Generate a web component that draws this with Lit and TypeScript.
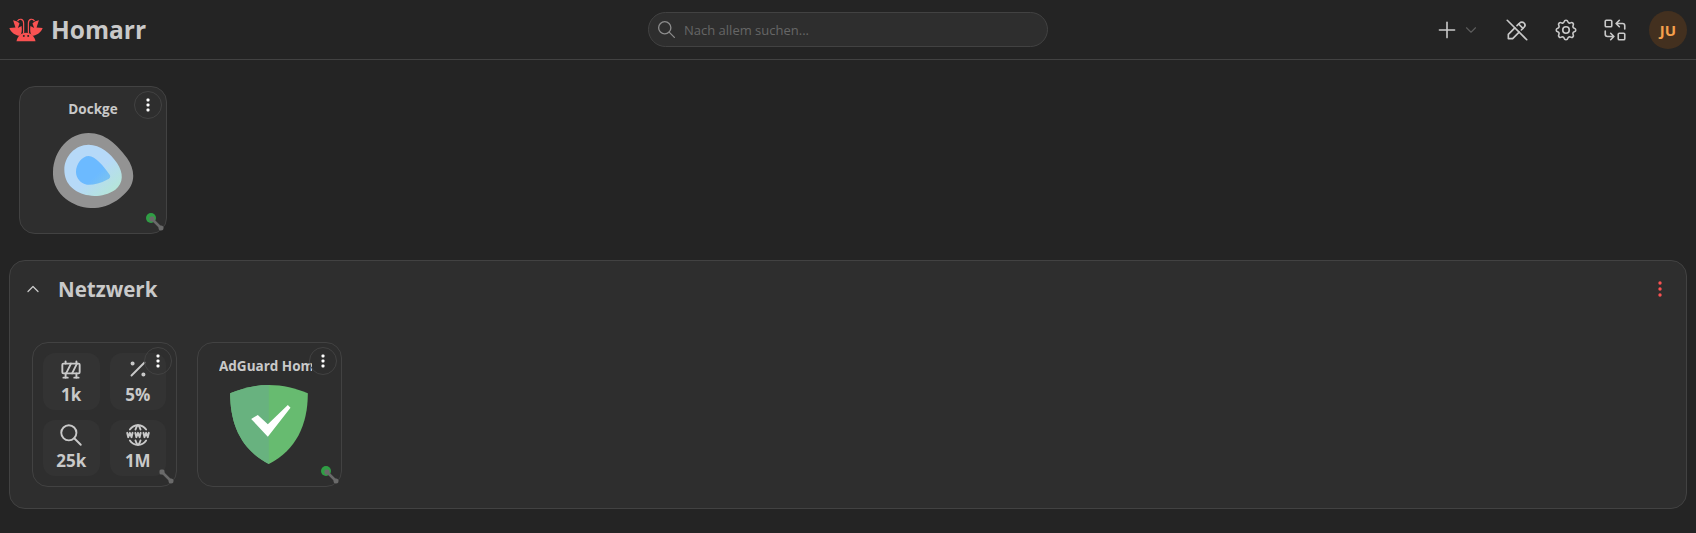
import { LitElement, css, html, svg } from "lit";
import { customElement } from "lit/decorators.js";

const tabler = (paths: string[], size: number, cls = "") => html`
  <svg
    class="icon ${cls}"
    width=${size}
    height=${size}
    viewBox="0 0 24 24"
    fill="none"
    stroke="currentColor"
    stroke-linecap="round"
    stroke-linejoin="round"
  >
    ${paths.map((d) => svg`<path d=${d}></path>`)}
  </svg>
`;

const ICONS = {
  search: ["M10 10m-7 0a7 7 0 1 0 14 0a7 7 0 1 0 -14 0", "M21 21l-6 -6"],
  plus: ["M12 5l0 14", "M5 12l14 0"],
  chevronDown: ["M6 9l6 6l6 -6"],
  chevronUp: ["M6 15l6 -6l6 6"],
  pencilOff: [
    "M10 10l-6 6v4h4l6 -6m1.99 -1.99l2.504 -2.504a2.828 2.828 0 1 0 -4 -4l-2.5 2.5",
    "M13.5 6.5l4 4",
    "M3 3l18 18",
  ],
  settings: [
    "M10.325 4.317c.426 -1.756 2.924 -1.756 3.35 0a1.724 1.724 0 0 0 2.573 1.066c1.543 -.94 3.31 .826 2.37 2.37a1.724 1.724 0 0 0 1.065 2.572c1.756 .426 1.756 2.924 0 3.35a1.724 1.724 0 0 0 -1.066 2.573c.94 1.543 -.826 3.31 -2.37 2.37a1.724 1.724 0 0 0 -2.572 1.065c-.426 1.756 -2.924 1.756 -3.35 0a1.724 1.724 0 0 0 -2.573 -1.066c-1.543 .94 -3.31 -.826 -2.37 -2.37a1.724 1.724 0 0 0 -1.065 -2.572c-1.756 -.426 -1.756 -2.924 0 -3.35a1.724 1.724 0 0 0 1.066 -2.573c-.94 -1.543 .826 -3.31 2.37 -2.37c1 .608 2.296 .07 2.572 -1.065z",
    "M9 12a3 3 0 1 0 6 0a3 3 0 0 0 -6 0",
  ],
  replace: [
    "M3 4a1 1 0 0 1 1 -1h4a1 1 0 0 1 1 1v4a1 1 0 0 1 -1 1h-4a1 1 0 0 1 -1 -1z",
    "M15 16a1 1 0 0 1 1 -1h4a1 1 0 0 1 1 1v4a1 1 0 0 1 -1 1h-4a1 1 0 0 1 -1 -1z",
    "M21 11v-3a2 2 0 0 0 -2 -2h-6l3 3m0 -6l-3 3",
    "M3 13v3a2 2 0 0 0 2 2h6l-3 -3m0 6l3 -3",
  ],
  barrier: [
    "M4 8a1 1 0 0 1 1 -1h14a1 1 0 0 1 1 1v7a1 1 0 0 1 -1 1h-14a1 1 0 0 1 -1 -1z",
    "M7 16v4",
    "M7.5 16l4.5 -9",
    "M13 16l4.5 -9",
    "M17 16v4",
    "M5 20h4",
    "M15 20h4",
    "M17 7v-2",
    "M7 7v-2",
  ],
  percent: [
    "M17 17m-1 0a1 1 0 1 0 2 0a1 1 0 1 0 -2 0",
    "M7 7m-1 0a1 1 0 1 0 2 0a1 1 0 1 0 -2 0",
    "M6 18l12 -12",
  ],
  www: [
    "M19.5 7a9 9 0 0 0 -7.5 -4a8.991 8.991 0 0 0 -7.484 4",
    "M11.5 3a16.989 16.989 0 0 0 -1.826 4",
    "M12.5 3a16.989 16.989 0 0 1 1.828 4",
    "M19.5 17a9 9 0 0 1 -7.5 4a8.991 8.991 0 0 1 -7.484 -4",
    "M11.5 21a16.989 16.989 0 0 1 -1.826 -4",
    "M12.5 21a16.989 16.989 0 0 0 1.828 -4",
    "M2 10l1 4l1.5 -4l1.5 4l1 -4",
    "M17 10l1 4l1.5 -4l1.5 4l1 -4",
    "M9.5 10l1 4l1.5 -4l1.5 4l1 -4",
  ],
};

const STATS = [
  { icon: ICONS.barrier, value: "1k" },
  { icon: ICONS.percent, value: "5%" },
  { icon: ICONS.search, value: "25k" },
  { icon: ICONS.www, value: "1M" },
];

const logo = html`
  <svg class="logo" width="34" height="24" viewBox="24 55 100 70" fill="#fa5252">
    <path d="M36 61 C43 62 50 65 55 71 L50 84 L61 78 C63 90 61 101 57 107 C44 107 30 98 25 84 L43 83 Z"></path>
    <path d="M112 61 C105 62 98 65 93 71 L98 84 L87 78 C85 90 87 101 91 107 C104 107 118 98 123 84 L105 83 Z"></path>
    <path d="M46 123 C49 107 61 98 74 98 C87 98 99 107 102 123 Z"></path>
    <path d="M67 100 V70 C67 57 54 55 49 64 M81 100 V70 C81 57 94 55 99 64" fill="none" stroke="#fa5252" stroke-width="3.5"></path>
    <rect x="65" y="105" width="5" height="5" fill="#242424"></rect>
    <rect x="78" y="105" width="5" height="5" fill="#242424"></rect>
  </svg>
`;

const dockgeLogo = html`
  <svg class="dockge" width="81" height="75" viewBox="128 165 243 225">
    <defs>
      <linearGradient id="dg" x1="0.3" y1="0.3" x2="0.9" y2="0.9">
        <stop offset="0.4" stop-color="#b6d9f8"></stop>
        <stop offset="1" stop-color="#b5e6d8"></stop>
      </linearGradient>
      <linearGradient id="dgi" x1="0.4" y1="0.4" x2="1" y2="0.9">
        <stop offset="0.4" stop-color="#6cbaff"></stop>
        <stop offset="1" stop-color="#7cc4ee"></stop>
      </linearGradient>
    </defs>
    <path fill="#939393" d="M235 165 C285 165 320 200 350 240 C375 275 378 320 340 350 C310 380 270 392 240 390 C190 388 130 350 128 290 C126 220 175 165 235 165Z"></path>
    <path fill="url(#dg)" d="M235 200 C270 200 300 225 320 255 C340 285 340 315 315 335 C290 352 255 358 235 352 C195 345 162 320 162 275 C162 235 195 200 235 200Z"></path>
    <path fill="url(#dgi)" d="M235 234 C255 234 280 265 298 290 C302 297 298 302 290 305 C270 316 245 322 230 320 C210 316 197 300 197 282 C197 258 215 234 235 234Z"></path>
  </svg>
`;

const adguardLogo = html`
  <svg class="adguard" width="78" height="79" viewBox="122 150 233 237">
    <path fill="#67bb70" d="M238 150 C280 150 320 160 355 175 C355 270 320 345 238 387 C156 345 122 270 122 175 C156 160 196 150 238 150 Z"></path>
    <path fill="#68b27f" d="M238 150 C196 150 156 160 122 175 C122 270 156 345 238 387 Z"></path>
    <path fill="#fff" d="M185 252 L205 240 L235 268 L295 210 L303 218 L235 305 Z"></path>
  </svg>
`;

const dotsMenu = html`
  <button class="menu">
    <svg width="4" height="14" viewBox="0 0 4 14" fill="#fff">
      <rect x="0.5" y="0.5" width="3" height="3" rx="1"></rect>
      <rect x="0.5" y="5.5" width="3" height="3" rx="1"></rect>
      <rect x="0.5" y="10.5" width="3" height="3" rx="1"></rect>
    </svg>
  </button>
`;

const resizeHandle = html`
  <svg class="handle" width="15" height="15" viewBox="0 0 15 15">
    <path d="M3 3 L12 12" stroke="#6a6a6a" stroke-width="2.5"></path>
    <rect x="0.5" y="0.5" width="5" height="5" rx="1.5" fill="#6a6a6a"></rect>
    <circle cx="12" cy="12" r="2.5" fill="#6a6a6a"></circle>
  </svg>
`;

@customElement("app-root")
export class AppRoot extends LitElement {
  static styles = css`
    :host {
      display: block;
      min-height: 533px;
      background: #242424;
      color: #c9c9c9;
      font-family: "Open Sans", "Noto Sans", sans-serif;
    }

    .icon {
      display: block;
      flex: none;
      stroke-width: 1.5;
    }

    header {
      display: grid;
      grid-template-columns: 1fr 400px 1fr;
      align-items: center;
      height: 59px;
      padding: 0 9px;
      border-bottom: 1px solid #424242;
    }

    .brand {
      display: flex;
      align-items: center;
      gap: 8px;
      font-size: 24.5px;
      font-weight: 700;
    }

    .search {
      display: flex;
      align-items: center;
      gap: 7px;
      height: 35px;
      padding: 0 7px;
      box-sizing: border-box;
      border: 1px solid #424242;
      border-radius: 18px;
      background: #2e2e2e;
      color: #666666;
      font-size: 13px;
    }

    .search .icon {
      color: #8c8c8c;
    }

    .actions {
      display: flex;
      justify-content: flex-end;
      align-items: center;
      gap: 19px;
    }

    .add {
      display: flex;
      align-items: center;
      gap: 2px;
      padding-right: 3px;
    }

    .chev {
      color: #5c5c5c;
    }

    .action {
      display: flex;
      justify-content: center;
      width: 30px;
    }

    .avatar {
      display: flex;
      align-items: center;
      justify-content: center;
      width: 38px;
      height: 38px;
      border-radius: 50%;
      background: #43301f;
      color: #f5a04d;
      font-size: 15px;
      font-weight: 700;
    }

    main {
      padding: 26px 9px 24px;
    }

    .top-row {
      display: flex;
      margin-left: 10px;
      margin-bottom: 26px;
    }

    .card {
      position: relative;
      box-sizing: border-box;
      width: 148px;
      height: 148px;
      border: 1px solid #424242;
      border-radius: 16px;
      background: #2e2e2e;
    }

    .card.app {
      display: flex;
      flex-direction: column;
      align-items: center;
      padding-top: 13px;
    }

    .title {
      font-size: 13.5px;
      font-weight: 700;
      line-height: 18px;
      white-space: nowrap;
    }

    .dockge {
      margin-top: 15px;
    }

    .card.small {
      width: 145px;
      height: 145px;
    }

    .card.small.app {
      padding-top: 14px;
    }

    .card.small .title {
      align-self: stretch;
      margin: 0 29px 0 21px;
      overflow: hidden;
    }

    .adguard {
      margin-top: 10px;
      margin-left: -2px;
    }

    .menu {
      position: absolute;
      top: 4px;
      right: 4px;
      display: flex;
      align-items: center;
      justify-content: center;
      width: 28px;
      height: 28px;
      padding: 0;
      border: 1px solid #424242;
      border-radius: 50%;
      background: transparent;
    }

    .dot {
      position: absolute;
      right: 10px;
      bottom: 10px;
      width: 10px;
      height: 10px;
      border-radius: 50%;
      background: #2f9e44;
    }

    .handle {
      position: absolute;
      right: 2px;
      bottom: 2px;
    }

    .section {
      box-sizing: border-box;
      height: 249px;
      border: 1px solid #424242;
      border-radius: 16px;
      background: #2e2e2e;
    }

    .section-head {
      display: flex;
      align-items: center;
      height: 55px;
      padding: 0 13px;
    }

    .section-head h2 {
      flex: 1;
      margin: 0 0 0 15px;
      font-size: 20.5px;
      font-weight: 700;
    }

    .more {
      display: flex;
      margin-right: 11px;
    }

    .section-body {
      display: flex;
      gap: 20px;
      padding: 26px 22px 0;
    }

    .stats {
      display: grid;
      grid-template-columns: 1fr 1fr;
      grid-template-rows: 1fr 1fr;
      gap: 10px;
      padding: 10px;
    }

    .stat {
      display: flex;
      flex-direction: column;
      align-items: center;
      justify-content: center;
      gap: 1px;
      padding-bottom: 1px;
      border-radius: 12px;
      background: #333333;
      font-size: 17px;
      font-weight: 700;
      line-height: 23px;
    }

    .stat .icon {
      stroke-width: 1.75;
    }
  `;

  render() {
    return html`
      <header>
        <div class="brand">${logo}<span>Homarr</span></div>
        <div class="search">
          ${tabler(ICONS.search, 21)}
          <span>Nach allem suchen...</span>
        </div>
        <div class="actions">
          <div class="add">
            ${tabler(ICONS.plus, 26)} ${tabler(ICONS.chevronDown, 18, "chev")}
          </div>
          <div class="action">${tabler(ICONS.pencilOff, 26)}</div>
          <div class="action">${tabler(ICONS.settings, 26)}</div>
          <div class="action">${tabler(ICONS.replace, 26)}</div>
          <div class="avatar">JU</div>
        </div>
      </header>
      <main>
        <div class="top-row">
          <div class="card app">
            <div class="title">Dockge</div>
            ${dockgeLogo} ${dotsMenu}
            <span class="dot"></span>
            ${resizeHandle}
          </div>
        </div>
        <section class="section">
          <div class="section-head">
            ${tabler(ICONS.chevronUp, 20)}
            <h2>Netzwerk</h2>
            <span class="more">
              <svg width="4" height="16" viewBox="0 0 4 16" fill="#fa5252">
                <circle cx="2" cy="2" r="1.7"></circle>
                <circle cx="2" cy="8" r="1.7"></circle>
                <circle cx="2" cy="14" r="1.7"></circle>
              </svg>
            </span>
          </div>
          <div class="section-body">
            <div class="card small stats">
              ${STATS.map(
                (s) => html`<div class="stat">${tabler(s.icon, 26)}<span>${s.value}</span></div>`
              )}
              ${dotsMenu} ${resizeHandle}
            </div>
            <div class="card small app">
              <div class="title">AdGuard Home</div>
              ${adguardLogo} ${dotsMenu}
              <span class="dot"></span>
              ${resizeHandle}
            </div>
          </div>
        </section>
      </main>
    `;
  }
}
